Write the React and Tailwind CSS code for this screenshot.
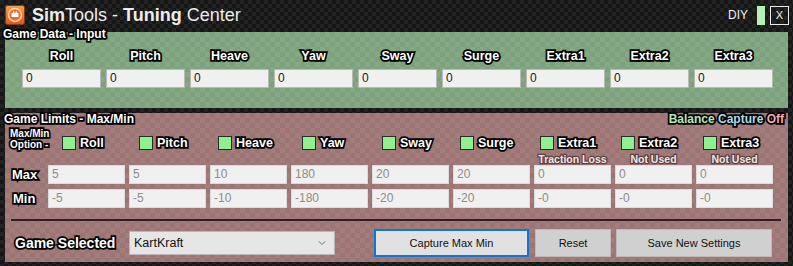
import React from 'react'
import { ChevronDown } from 'lucide-react'

const outline = "text-white font-bold [-webkit-text-stroke:3.5px_#000] [paint-order:stroke_fill]"

const axes = ['Roll', 'Pitch', 'Heave', 'Yaw', 'Sway', 'Surge', 'Extra1', 'Extra2', 'Extra3']

const limits = [
  { name: 'Roll', max: '5', min: '-5', pad: 'pl-[14px]' },
  { name: 'Pitch', max: '5', min: '-5', pad: 'pl-[10px]' },
  { name: 'Heave', max: '10', min: '-10', pad: 'pl-[8px]' },
  { name: 'Yaw', max: '180', min: '-180', pad: 'pl-[11px]' },
  { name: 'Sway', max: '20', min: '-20', pad: 'pl-[10px]' },
  { name: 'Surge', max: '20', min: '-20', pad: 'pl-[7px]' },
  { name: 'Extra1', max: '0', min: '-0', pad: 'pl-[6px]', note: 'Traction Loss' },
  { name: 'Extra2', max: '0', min: '-0', pad: 'pl-[6px]', note: 'Not Used' },
  { name: 'Extra3', max: '0', min: '-0', pad: 'pl-[7px]', note: 'Not Used' },
]

const Logo = () => (
  <svg width="20" height="20" viewBox="0 0 20 20">
    <defs>
      <linearGradient id="lg" x1="0" y1="0" x2="0" y2="1">
        <stop offset="0" stopColor="#f7a04a" />
        <stop offset="1" stopColor="#d9571a" />
      </linearGradient>
    </defs>
    <rect x="0.5" y="0.5" width="19" height="19" rx="2" fill="url(#lg)" stroke="#8a3a10" />
    <circle cx="10" cy="10" r="6.5" fill="#f26b2a" stroke="#ffd9b8" strokeWidth="1.4" />
    <rect x="6.5" y="8" width="7" height="4" rx="0.6" fill="#fff" />
    <rect x="8" y="6.5" width="1.4" height="2" fill="#fff" />
    <rect x="10.6" y="6.5" width="1.4" height="2" fill="#fff" />
  </svg>
)

const GameDataPanel = () => (
  <div className="relative mx-[5px] mt-[2px] h-[76px] bg-[image:repeating-conic-gradient(#7ca17c_0_25%,#84a984_0_50%)] bg-[length:10px_10px]">
    <div className={`absolute -top-[5px] -left-[2px] text-[12px] leading-[14px] ${outline}`}>Game Data - Input</div>
    <div className="pl-[17px] pt-[17px]">
      <div className="grid grid-cols-[repeat(9,79px)] gap-x-[5px]">
        {axes.map((a) => (
          <div key={a} className={`text-center text-[12.5px] leading-[15px] ${outline}`}>{a}</div>
        ))}
      </div>
      <div className="mt-[5px] grid grid-cols-[repeat(9,79px)] gap-x-[5px]">
        {axes.map((a) => (
          <div key={a} className="h-[19px] bg-[#f0f0f0] border border-[#b9b9b9] pl-[3px] text-[12px] leading-[17px] text-[#1a1a1a]">0</div>
        ))}
      </div>
    </div>
  </div>
)

const Field = ({ value }) => (
  <div className="h-[19px] bg-[#f0f0f0] border border-[#dcdcdc] pl-[3px] text-[12px] leading-[17px] text-[#8c8c8c]">{value}</div>
)

const LimitsPanel = () => (
  <div className="mx-[5px] mt-[5px] h-[149px] bg-[image:repeating-conic-gradient(#9c7474_0_25%,#a37c7c_0_50%)] bg-[length:10px_10px]">
    <div className="flex justify-between h-[12px] pr-[4px]">
      <div className={`-ml-[1px] text-[12px] leading-[12px] ${outline}`}>Game Limits - Max/Min</div>
      <div className="text-[12px] leading-[12px] font-bold [-webkit-text-stroke:3.5px_#000] [paint-order:stroke_fill]">
        <span className="text-[#b2eab0]">Balance </span>
        <span className="text-[#a9dcea]">Capture </span>
        <span className="text-[#f2aaaa]">Off</span>
      </div>
    </div>

    <div className="grid grid-cols-[39px_repeat(9,77px)] gap-x-[4px] mt-[4px] h-[21px] items-end">
      <div className={`pl-[5px] text-[10px] leading-[10.5px] whitespace-nowrap self-start ${outline}`}>
        Max/Min<br />Option -
      </div>
      {limits.map((l) => (
        <div key={l.name} className={`flex items-center gap-[4px] ${l.pad}`}>
          <div className="w-[14px] h-[14px] bg-[#8ef08e] border border-[#2a2a2a]" />
          <span className={`text-[12.5px] leading-[14px] ${outline}`}>{l.name}</span>
        </div>
      ))}
    </div>

    <div className="grid grid-cols-[39px_repeat(9,77px)] gap-x-[4px] mt-[4px] h-[11px]">
      <div />
      {limits.map((l) => (
        <div key={l.name} className="text-center text-[10.5px] leading-[11px] font-bold text-[#ece6e6] [-webkit-text-stroke:2.5px_#5e4242] [paint-order:stroke_fill]">
          {l.note || ''}
        </div>
      ))}
    </div>

    <div className="grid grid-cols-[39px_repeat(9,77px)] gap-x-[4px] gap-y-[5px]">
      <div className={`pl-[7px] text-[13px] leading-[19px] ${outline}`}>Max</div>
      {limits.map((l) => <Field key={l.name} value={l.max} />)}
      <div className={`pl-[8px] text-[13px] leading-[19px] ${outline}`}>Min</div>
      {limits.map((l) => <Field key={l.name} value={l.min} />)}
    </div>

    <div className="mt-[11px] ml-[6px] mr-[7px] h-[2px] bg-[#2a2222]" />

    <div className="flex items-center mt-[8px] h-[28px]">
      <div className={`pl-[10px] w-[124px] text-[14px] leading-[16px] ${outline}`}>Game Selected</div>
      <div className="w-[206px] h-[24px] flex items-center justify-between bg-[#e6e6e6] border border-[#b8b8b8] pl-[4px] pr-[6px] text-[12.5px] text-[#111]">
        <span>KartKraft</span>
        <ChevronDown size={12} strokeWidth={1.4} className="text-[#444]" />
      </div>
      <button className="ml-[39px] w-[155px] h-[28px] bg-[#e1e1e1] border-2 border-[#0a78d4] text-[11px] text-[#111]">Capture Max Min</button>
      <button className="ml-[6px] w-[76px] h-[28px] bg-[#d0d0d0] border border-[#c0b8b8] text-[11px] text-[#111]">Reset</button>
      <button className="ml-[5px] w-[156px] h-[28px] bg-[#d0d0d0] border border-[#c0b8b8] text-[11px] text-[#111]">Save New Settings</button>
    </div>
  </div>
)

export default function App() {
  return (
    <div className="w-[793px] h-[266px] overflow-hidden font-['Liberation_Sans',Arial,sans-serif] bg-[#1b1b1b] bg-[image:repeating-conic-gradient(#161616_0_25%,#232323_0_50%)] bg-[length:8px_8px]">
      <div className="flex items-center h-[30px] pl-[5px] pr-[4px]">
        <Logo />
        <div className="ml-[7px] text-[18px] leading-[20px] text-[#ececec]">
          <span className="font-bold">Sim</span>Tools - <span className="font-bold">Tuning</span> Center
        </div>
        <div className="ml-auto flex items-center">
          <span className="text-[12px] text-[#f0f0f0]">DIY</span>
          <div className="ml-[9px] w-[8px] h-[19px] bg-[#b4f2b4]" />
          <div className="ml-[5px] w-[19px] h-[19px] border border-[#e8e8e8] flex items-center justify-center text-[11px] text-[#f0f0f0]">X</div>
        </div>
      </div>
      <GameDataPanel />
      <LimitsPanel />
    </div>
  )
}
